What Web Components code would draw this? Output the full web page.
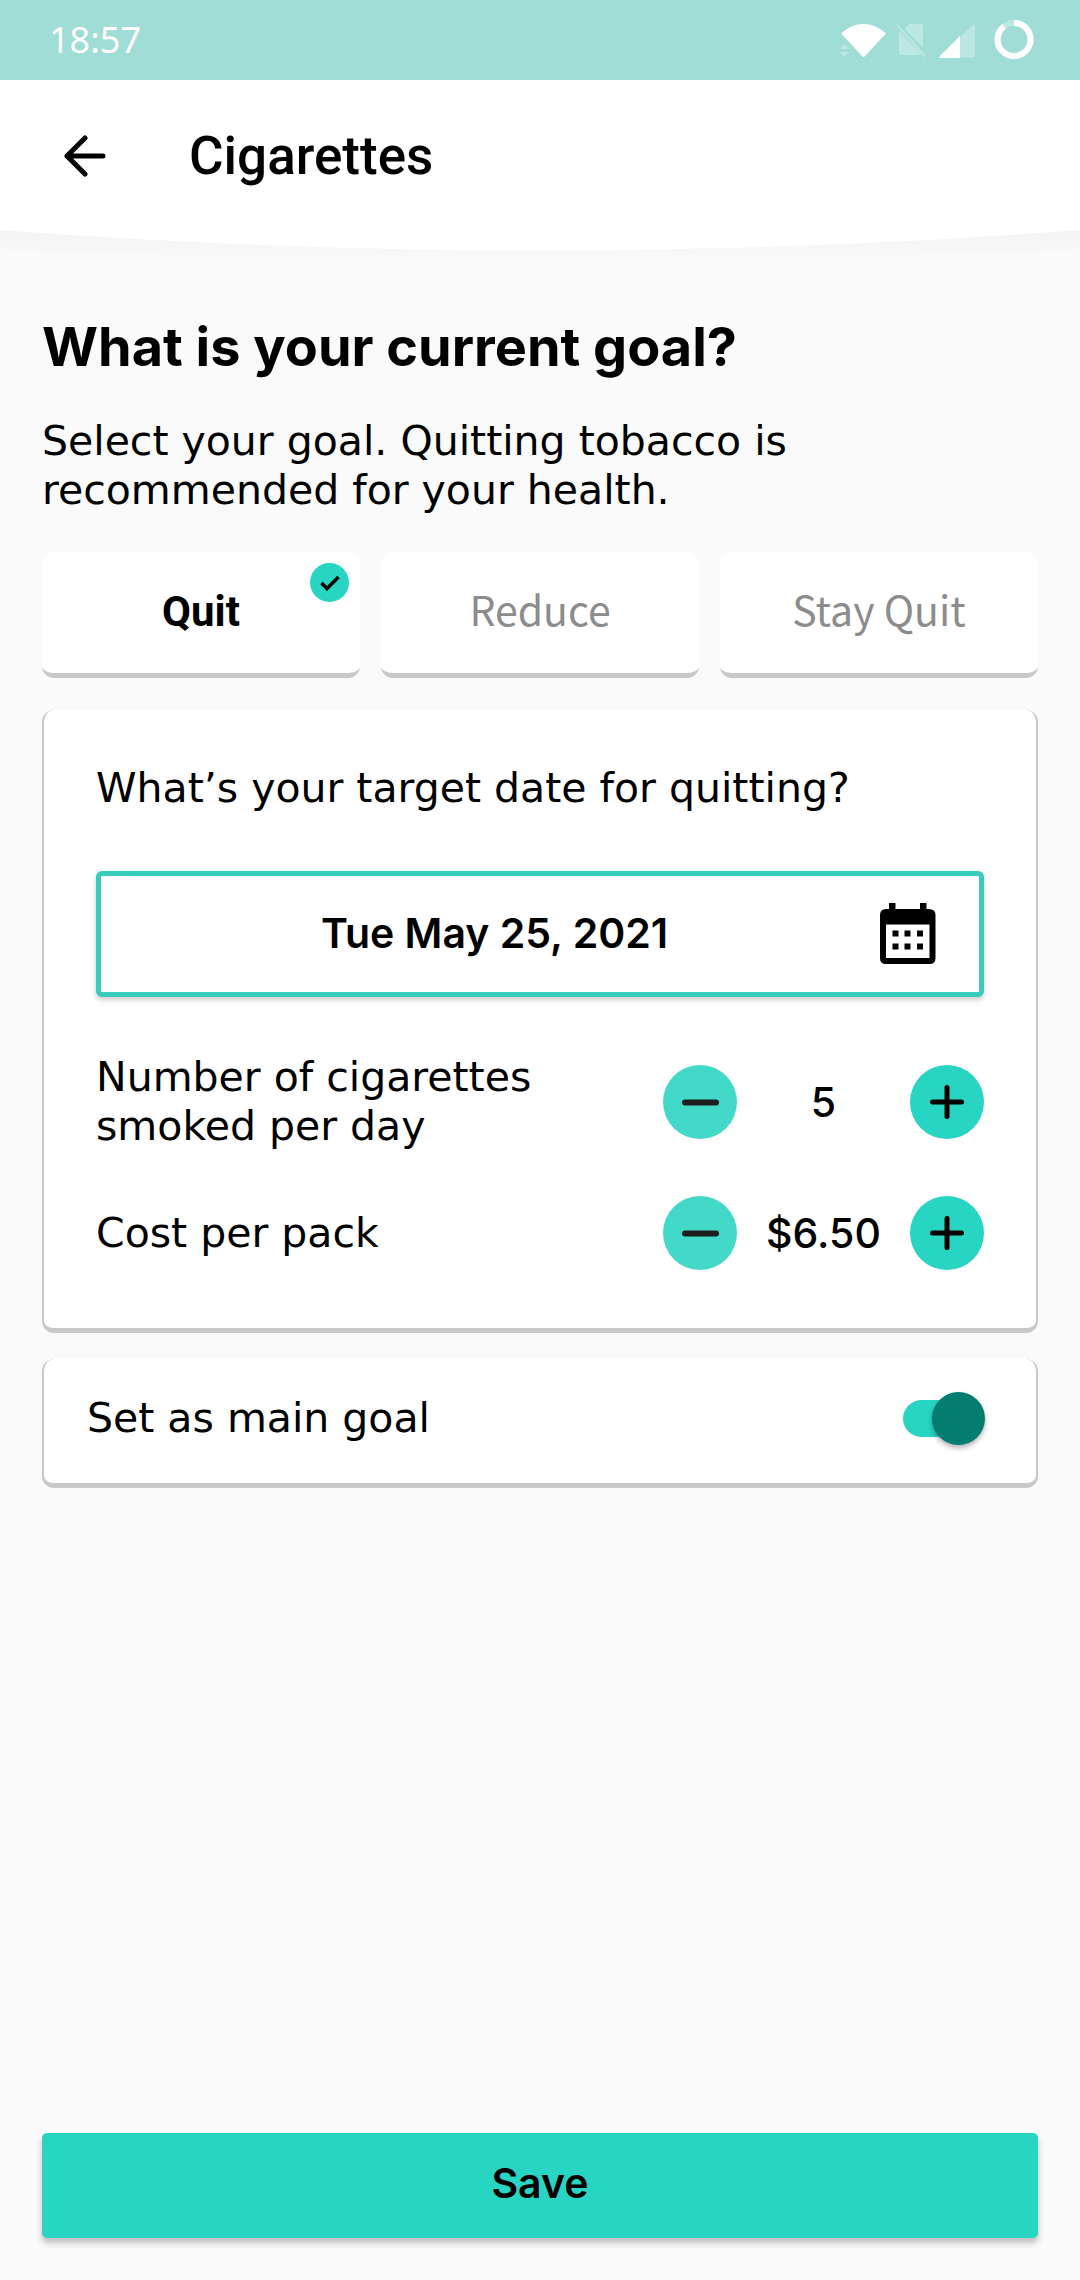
<!DOCTYPE html>
<html lang="en">
<head>
<meta charset="utf-8">
<meta name="viewport" content="width=device-width, initial-scale=1">
<title>Cigarettes</title>
<style>
  html { height: 100%; }
  body {
    margin: 0; min-height: 100%; display: flex; background: #fafafa; color: #000;
    --teal: #28d4c2; --edge: #c8c8c8; --radius: 12px; --body: 41px; --line: 49px;
    font-family: "DejaVu Sans", Inter, sans-serif; font-size: var(--body); line-height: var(--line);
  }
</style>
</head>
<body>
<goal-screen></goal-screen>

<template id="t-goal-screen">
  <style>
    :host { flex: 1; min-width: 0; display: flex; flex-direction: column; }
    main { flex: 1; display: flex; flex-direction: column; padding: 66px 42px 42px; }
    h1 { margin: 0 0 40px; font: 700 54px/60px Inter, sans-serif; }
    p { margin: 0 0 37px; max-width: 800px; }
    goal-picker { margin-bottom: 32px; }
    .details { margin-bottom: 26px; }
    save-button { margin-top: auto; }
  </style>
  <status-bar>18:57</status-bar>
  <app-header>Cigarettes</app-header>
  <main>
    <h1>What is your current goal?</h1>
    <p>Select your goal. Quitting tobacco is recommended for your health.</p>
    <goal-picker></goal-picker>
    <info-card class="details">
      <date-field date="Tue May 25, 2021">What’s your target date for quitting?</date-field>
      <number-stepper value="5">Number of cigarettes smoked per day</number-stepper>
      <number-stepper value="$6.50">Cost per pack</number-stepper>
    </info-card>
    <info-card compact>
      <toggle-row>Set as main goal</toggle-row>
    </info-card>
    <save-button>Save</save-button>
  </main>
</template>

<template id="t-status-bar">
  <style>
    :host { display: flex; align-items: center; justify-content: space-between; height: 80px;
      padding: 0 46px 0 49px; background: #a0ddd6; color: #fff; font: 36px/50px "Noto Sans", sans-serif; }
    .icons { display: flex; align-items: center; }
    svg { display: block; height: 40px; }
    .wifi { width: 48px; margin-right: 8px; }
    .sim { width: 30px; margin-right: 13px; }
    .signal { width: 36px; margin-right: 19px; }
    .battery { width: 40px; }
  </style>
  <span><slot></slot></span>
  <div class="icons" aria-hidden="true">
    <svg class="wifi" viewBox="0 0 48 40"><path d="M1 13.5Q11 4 23.500 4T46 13.500L23.500 37.500Z" fill="#fff"/><path d="M0 29L4.500 24.500L9 29ZM0 32H9L4.500 36.500Z" fill="#fff" opacity=".35"/></svg>
    <svg class="sim" viewBox="0 0 30 40" fill="#fff" opacity=".3"><path d="M8.500 9L13 4H24.500Q27 4 27 6.500V27.500Z"/><path d="M3 11L26 35H5.500Q3 35 3 32.500Z"/><path d="M0 5L2 4.500L30 35.500L28.500 37.500Z"/></svg>
    <svg class="signal" viewBox="0 0 36 40" fill="#fff"><path d="M35 4Q36 4 36 6V35.500Q36 37.500 34 37.500H2Q0 37.500 1 36Z" opacity=".3"/><path d="M21 16V38H1.500Q-.5 37.500 1 36Z"/></svg>
    <svg class="battery" viewBox="0 0 40 40" fill="none" stroke="#fff" stroke-width="6"><circle cx="20" cy="19.500" r="16.500" opacity=".3"/><path d="M20 3A16.500 16.500 0 1 1 10 6.400"/></svg>
  </div>
</template>

<template id="t-app-header">
  <style>
    :host { display: block; }
    .row { display: flex; align-items: center; height: 151px; padding-left: 64px; background: #fff; }
    button { display: block; border: 0; padding: 0; margin-right: 83px; background: none; }
    svg { display: block; }
    .title { font: 500 53px/64px Roboto, sans-serif; }
    .curve { width: 100%; height: 20px; overflow: visible; }
  </style>
  <div class="row">
    <button type="button" aria-label="Back"><svg width="42" height="42" viewBox="0 0 42 42" fill="none" stroke="#000" stroke-width="5" stroke-linecap="round" stroke-linejoin="round"><path d="M21 3L3 21L21 39M3 21H39"/></svg></button>
    <span class="title"><slot></slot></span>
  </div>
  <svg class="curve" viewBox="0 0 1080 20" preserveAspectRatio="none" aria-hidden="true">
    <defs><linearGradient id="fade" x1="0" y1="0" x2="0" y2="1"><stop offset="0" stop-color="#f4f4f4"/><stop offset=".4" stop-color="#f6f6f6"/><stop offset="1" stop-color="#fafafa"/></linearGradient></defs>
    <path d="M0 -1H1080V18Q540 44 0 18Z" fill="url(#fade)"/>
    <path d="M0 -1H1080Q540 40 0 -1Z" fill="#fff"/>
  </svg>
</template>

<template id="t-goal-picker">
  <style>
    :host { display: block; }
    fieldset { display: grid; grid-template-columns: repeat(3, 1fr); gap: 21px; border: 0; margin: 0; padding: 0; min-width: 0; }
    label { position: relative; display: block; height: 121px; text-align: center;
      background: #fff; border-bottom: 5px solid var(--edge); border-radius: var(--radius);
      color: #8c8c8c; font: 42px/119px Roboto, sans-serif; }
    span { font-family: "Noto Sans CJK SC", sans-serif; font-size: 41px; line-height: 0; }
    :checked + span { color: #000; font: inherit; font-weight: 700; }
    input { position: absolute; inset: 0; margin: 0; width: 100%; height: 100%; opacity: 0; }
    svg { position: absolute; top: 11px; right: 11px; display: none; }
    :checked ~ svg { display: block; }
  </style>
  <fieldset aria-label="Current goal">
    <label><input type="radio" name="goal" checked><span>Quit</span>
      <svg width="39" height="39" viewBox="0 0 39 39" aria-hidden="true"><circle cx="19.500" cy="19.500" r="19.500" fill="#28d4c2"/><path d="M11.500 20L17 25.500L28.500 14" fill="none" stroke="#000" stroke-width="3.500"/></svg></label>
    <label><input type="radio" name="goal"><span>Reduce</span></label>
    <label><input type="radio" name="goal"><span>Stay Quit</span></label>
  </fieldset>
</template>

<template id="t-info-card">
  <style>
    :host { display: block; background: #fff; border: 2px solid var(--edge); border-width: 0 2px 5px;
      border-radius: var(--radius); padding: 54px 52px 58px; }
    :host([compact]) { padding: 33px 51px 38px 43px; }
  </style>
  <slot></slot>
</template>

<template id="t-date-field">
  <style>
    :host { display: block; margin-bottom: 56px; }
    label { display: block; margin: 0 0 58px; }
    button { display: flex; align-items: center; width: 100%; height: 126px; box-sizing: border-box; padding: 0 43px 2px 8px;
      background: #fff; color: #000; border: 5px solid #38ccbc; border-radius: 6px; box-shadow: 0 3px 5px rgba(0,0,0,.2);
      font: 600 var(--body)/var(--line) Inter, sans-serif; }
    span { flex: 1; text-align: center; }
    svg { display: block; }
  </style>
  <label for="date"><slot></slot></label>
  <button id="date" type="button"><span></span>
    <svg width="56" height="61" viewBox="0 0 56 61" aria-hidden="true"><path fill-rule="evenodd" d="M9 0H15.500V6H40V0H46.500V6H49Q55.500 6 55.500 12V55Q55.500 61 49.500 61H6Q0 61 0 55V12Q0 6 6 6H9ZM6 21.500V55H49.500V21.500Z"/><path d="M12.500 27.500h6v6h-6zM24.500 27.500h6v6h-6zM37 27.500h6v6h-6zM12.500 40.500h6v6h-6zM24.500 40.500h6v6h-6zM37 40.500h6v6h-6z"/></svg>
  </button>
</template>

<template id="t-number-stepper">
  <style>
    :host { display: flex; align-items: center; justify-content: space-between; gap: 40px; }
    :host(:not(:last-child)) { margin-bottom: 45px; }
    label { max-width: 480px; }
    .control { display: flex; align-items: center; flex: 0 0 321px; }
    output { flex: 1; text-align: center; font: 500 var(--body)/var(--line) Inter, sans-serif; }
    button { flex: none; width: 74px; height: 74px; padding: 0; border: 0; border-radius: 50%; background: var(--teal); }
    .minus { opacity: .88; }
    svg { display: block; }
  </style>
  <label for="value"><slot></slot></label>
  <div class="control">
    <button class="minus" type="button" aria-label="Decrease"><svg width="74" height="74" viewBox="0 0 74 74" stroke="#000" stroke-width="6" stroke-linecap="round"><path d="M22 37.500H53"/></svg></button>
    <output id="value"></output>
    <button type="button" aria-label="Increase"><svg width="74" height="74" viewBox="0 0 74 74" stroke="#000" stroke-width="5" stroke-linecap="round"><path d="M22.500 37H51.500M37 22.500V51.500"/></svg></button>
  </div>
</template>

<template id="t-toggle-row">
  <style>
    :host { display: flex; align-items: center; justify-content: space-between; }
    input { appearance: none; position: relative; display: flex; justify-content: flex-end; width: 82px; height: 53px; margin: 0; }
    input::before { content: ""; position: absolute; inset: 8px 10px 8px 0; border-radius: 19px; background: var(--teal); }
    input::after { content: ""; position: relative; width: 53px; height: 53px; border-radius: 50%; background: #037d70; box-shadow: 0 3px 5px rgba(0,0,0,.3); }
  </style>
  <label for="toggle"><slot></slot></label>
  <input id="toggle" type="checkbox" role="switch" checked>
</template>

<template id="t-save-button">
  <style>
    :host { display: block; }
    button { display: block; width: 100%; height: 105px; padding: 0 0 4px; border: 0; border-radius: 5px; background: var(--teal); color: #000;
      box-shadow: 0 5px 6px rgba(0,0,0,.24); font: 600 var(--body)/var(--line) Inter, sans-serif; }
  </style>
  <button type="button"><slot></slot></button>
</template>

<script>
  class TemplateElement extends HTMLElement {
    constructor() {
      super();
      const source = document.getElementById("t-" + this.localName);
      this.attachShadow({ mode: "open" }).append(source.content.cloneNode(true));
    }
  }
  class StatusBar extends TemplateElement {}
  class AppHeader extends TemplateElement {}
  class GoalPicker extends TemplateElement {}
  class InfoCard extends TemplateElement {}
  class DateField extends TemplateElement {
    connectedCallback() { this.shadowRoot.querySelector("button span").textContent = this.getAttribute("date"); }
  }
  class NumberStepper extends TemplateElement {
    connectedCallback() { this.shadowRoot.querySelector("output").textContent = this.getAttribute("value"); }
  }
  class ToggleRow extends TemplateElement {}
  class SaveButton extends TemplateElement {}
  class GoalScreen extends TemplateElement {}

  customElements.define("status-bar", StatusBar);
  customElements.define("app-header", AppHeader);
  customElements.define("goal-picker", GoalPicker);
  customElements.define("info-card", InfoCard);
  customElements.define("date-field", DateField);
  customElements.define("number-stepper", NumberStepper);
  customElements.define("toggle-row", ToggleRow);
  customElements.define("save-button", SaveButton);
  customElements.define("goal-screen", GoalScreen);
</script>
</body>
</html>
